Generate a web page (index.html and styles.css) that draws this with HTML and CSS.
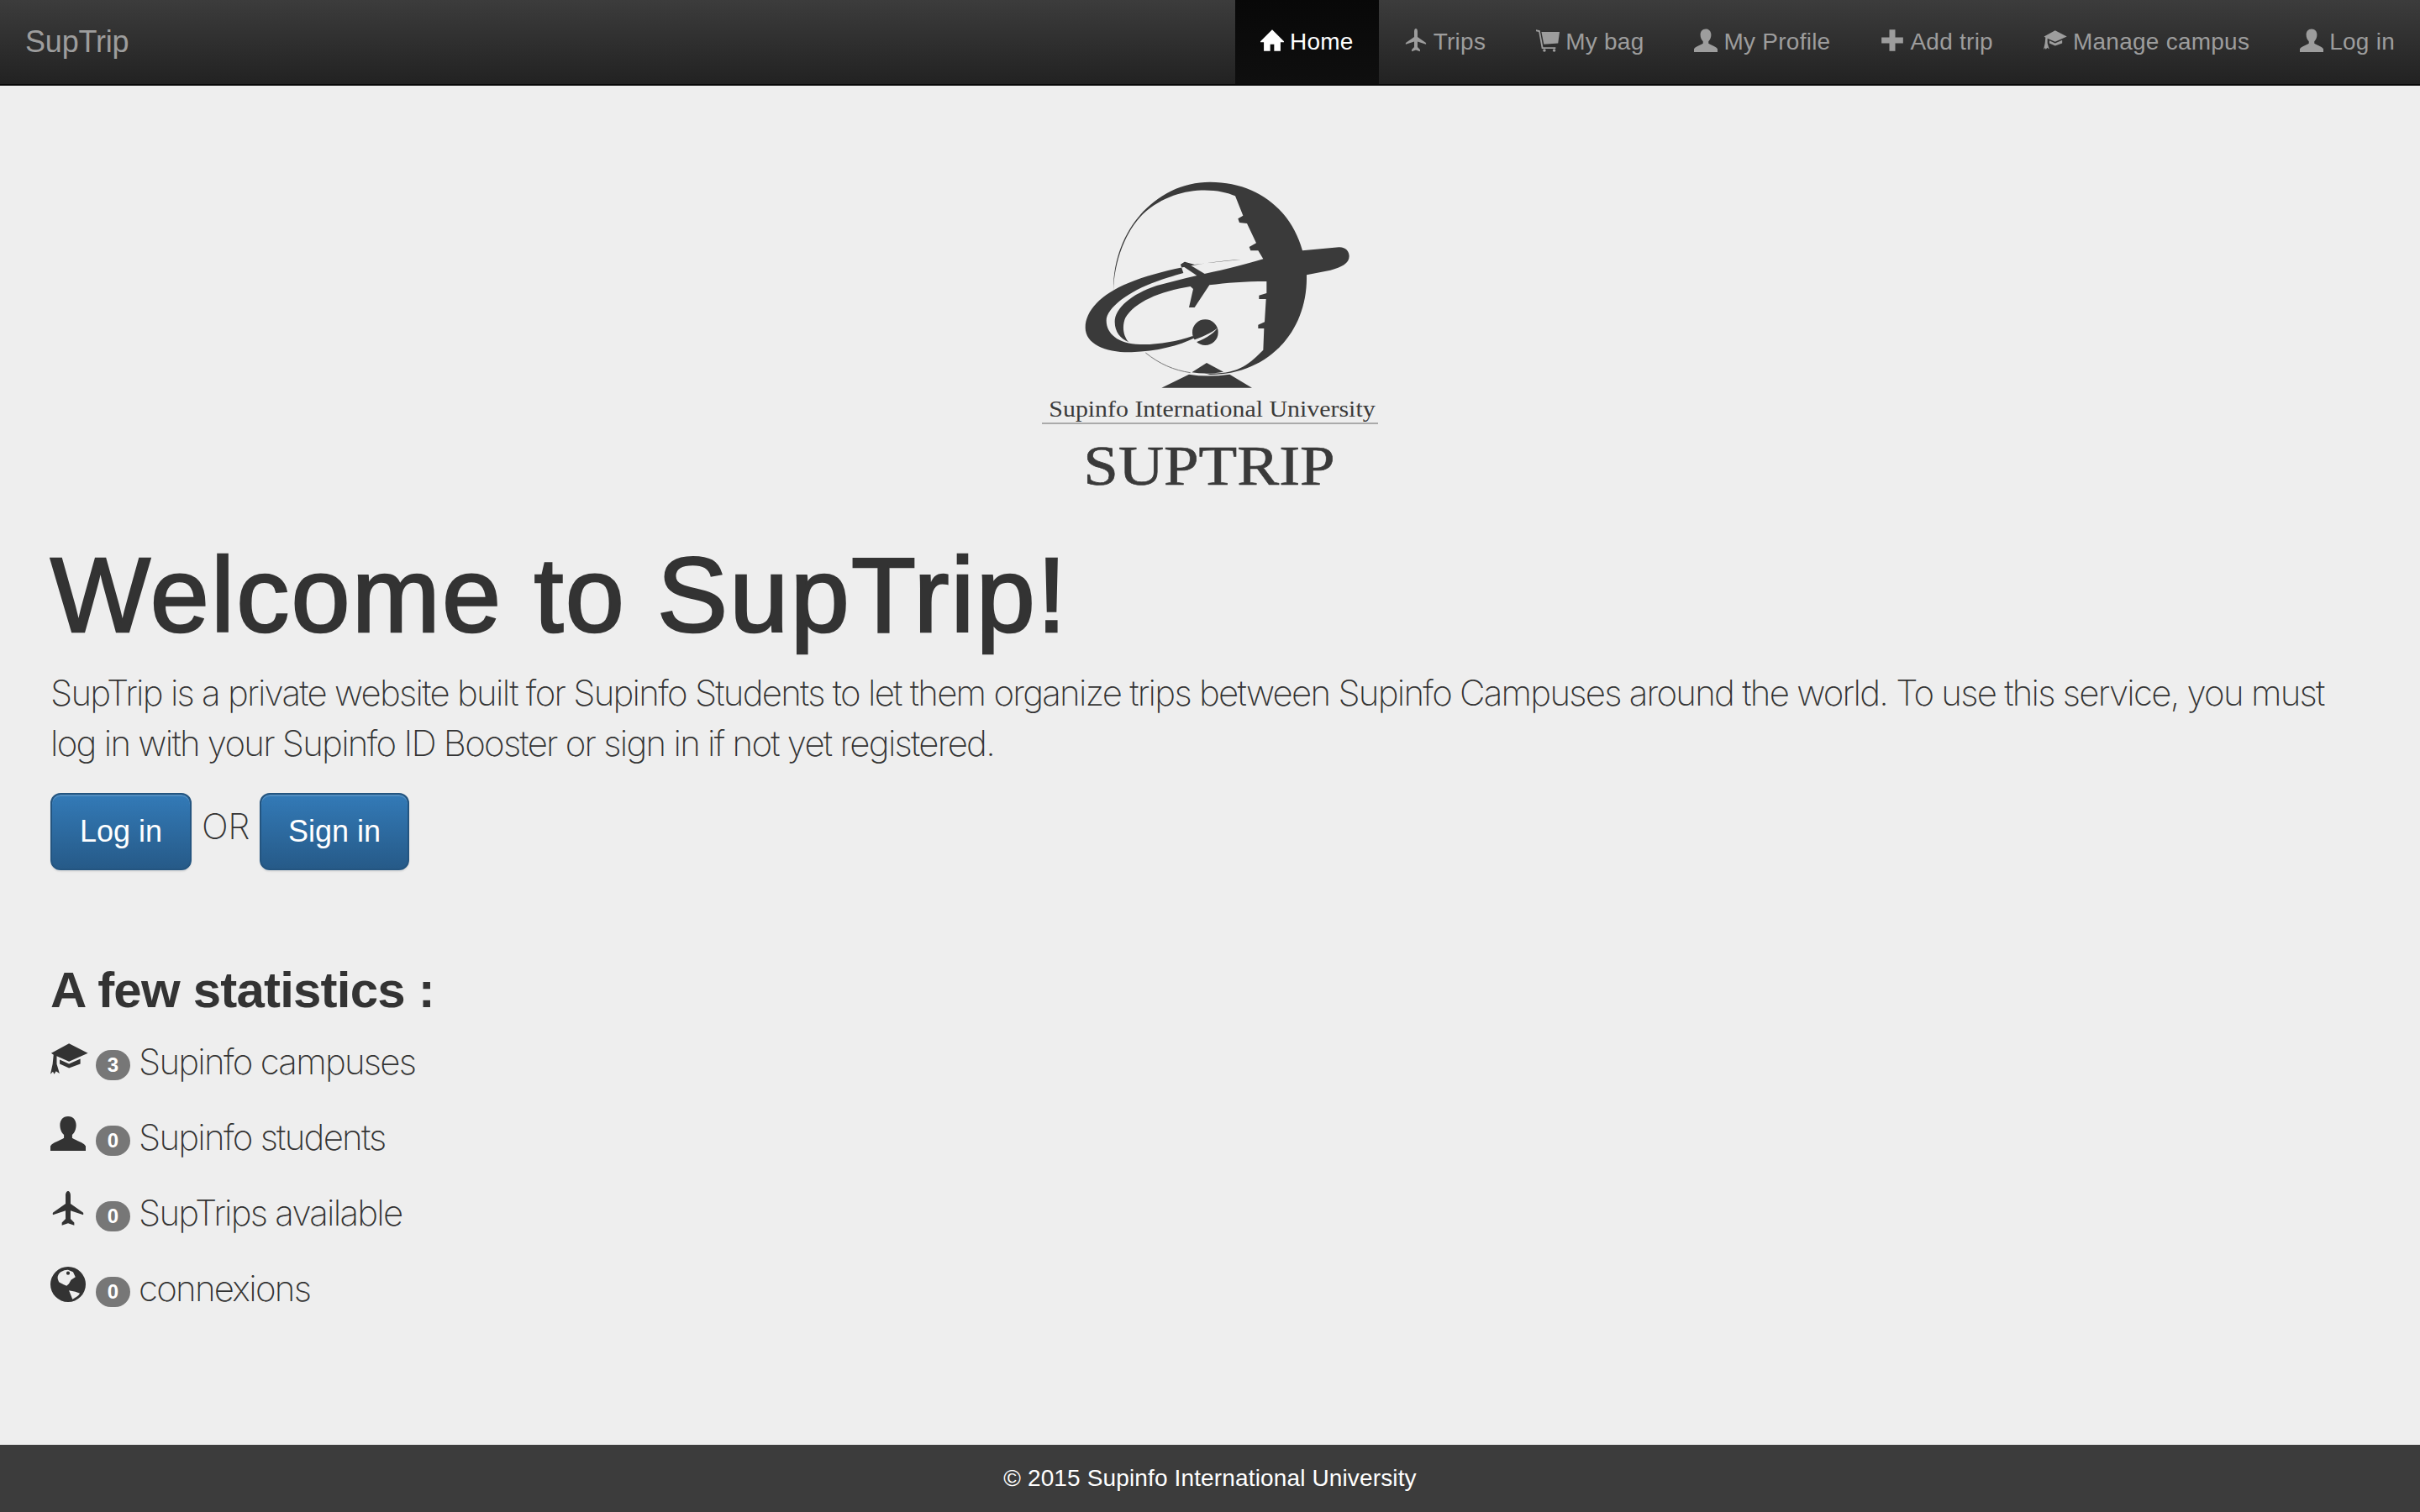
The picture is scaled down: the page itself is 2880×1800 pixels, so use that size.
FILE: index.html
```html
<!DOCTYPE html>
<html lang="en">
<head>
<meta charset="utf-8">
<title>SupTrip</title>
<link rel="stylesheet" href="styles.css">
</head>
<body>
<svg class="sprite" xmlns="http://www.w3.org/2000/svg">
  <symbol id="i-home" viewBox="0 0 24 24"><path d="M12 1 0 13v1h3.500v9H10v-7h4v7h6.500v-9H24v-1z"/></symbol>
  <symbol id="i-plane" viewBox="0 0 24 24"><path d="M12 0c-1.100 0-1.700 1.500-1.700 3v5.600L2 14.400c-.5.400-.5 1-.3 1.700l8.600-2.800v5.600l-2.500 2.500v1.900L12 21.800l4.200 1.500v-1.900l-2.500-2.500v-5.600l8.600 2.800c.2-.7.200-1.300-.3-1.700l-8.300-5.800V3c0-1.500-.6-3-1.700-3z"/></symbol>
  <symbol id="i-cart" viewBox="0 0 24 24"><path d="M5.500 3.500H24l-1.500 11.500L8 16z"/><path d="M0 1l4 1 3.200 17H20v1.600H5.800L2.800 3.500 0 2.800z"/><circle cx="8.500" cy="22.300" r="1.500"/><circle cx="18.500" cy="22.300" r="1.500"/></symbol>
  <symbol id="i-user" viewBox="0 0 24 24"><path d="M12 .5c-3.600 0-5.500 2.700-5.500 6 0 2.800 1.200 5.300 2.700 6.600v2.200c-3 2-7.700 3-9.200 5.500v3.200h24v-3.200c-1.500-2.500-6.200-3.500-9.200-5.500v-2.200c1.500-1.300 2.700-3.800 2.700-6.600 0-3.300-1.900-6-5.500-6z"/></symbol>
  <symbol id="i-plus" viewBox="0 0 24 24"><path d="M9 1h6v8h8v6h-8v8H9v-8H1V9h8z"/></symbol>
  <symbol id="i-edu" viewBox="0 0 24 20"><path d="M.5 6.100 11.800 0l12 6.100-12 5.400L4 8v5l1.800 6-2.200-1.400-1.200 1.800-.8-1.600L0 19.400 1.400 13 2 7.200z"/><path d="M5.900 10.200 11.800 12.900 19 9.700v3.200l-7.200 2.700-5.900-2.700z"/></symbol>
  <symbol id="i-globe" viewBox="0 0 24 24"><path fill-rule="evenodd" d="M12 0a12 12 0 1 0 0 24 12 12 0 0 0 0-24zM5 6.600C5.500 5 6.500 4 7 3.600 9 2.400 11 2 12 2.200l3.400 1.400L17 7l-3 2-1.400 2.600L11 13l-2-.8-3-1.600C5 9 4.800 8 5 6.600zM12 3.200a1.200 1.200 0 1 0 0 2.400 1.200 1.200 0 0 0 0-2.400zM12.600 16.200 17 17l3 1.200c-1 1.600-2 2.400-5 4l-1-2.600z"/></symbol>
</svg>

<header class="navbar">
  <a class="brand">SupTrip</a>
  <nav class="nav">
    <a class="nav-item active"><svg class="icon"><use href="#i-home"/></svg>Home</a>
    <a class="nav-item"><svg class="icon"><use href="#i-plane"/></svg>Trips</a>
    <a class="nav-item"><svg class="icon"><use href="#i-cart"/></svg>My bag</a>
    <a class="nav-item"><svg class="icon"><use href="#i-user"/></svg>My Profile</a>
    <a class="nav-item"><svg class="icon"><use href="#i-plus"/></svg>Add trip</a>
    <a class="nav-item"><svg class="icon"><use href="#i-edu"/></svg>Manage campus</a>
    <a class="nav-item"><svg class="icon"><use href="#i-user"/></svg>Log in</a>
  </nav>
</header>

<main class="content">
  <svg class="logo" viewBox="0 0 1320 1200" xmlns="http://www.w3.org/2000/svg">
    <g class="logo-fill">
      <path d="M315 440C312 220 470 50 660 50C830 50 950 150 990 295L1120 283C1145 282 1157 298 1157 315C1157 340 1130 355 1090 365L1005 382C1010 590 860 740 660 738L640 733C760 740 800 700 850 650L853 573L832 573L832 560L855 550L860 468L835 468L835 455L862 447L862 405C780 405 720 410 658 418L605 498L585 498L600 432L590 423C480 440 390 480 358 535C345 565 350 600 370 622C340 610 320 585 320 550C320 500 380 450 470 420L575 393L640 378C720 362 790 342 850 325L832 295L805 295L800 282L825 268L792 198L765 195L760 181L778 170L750 100C680 68 530 62 420 165C360 225 318 330 315 440Z"/>
      <path d="M770 327C640 335 480 365 370 410C270 450 215 510 215 570C215 630 290 660 380 658C470 655 550 635 605 607L598 600C540 620 470 632 410 630C330 628 290 590 290 545C290 500 370 440 470 405C490 397 530 385 565 375L555 345L570 335L605 345C660 338 720 332 770 327Z"/>
      <path d="M570 335 645 380 625 392 555 345Z"/>
      <circle cx="643" cy="587" r="46"/>
      <path d="M595 730 648 696 708 728Q650 738 595 730Z"/>
      <path d="M487 785 585 737Q650 748 730 737L810 785Z"/>
    </g>
    <path class="logo-cut" d="M592 618C630 605 665 590 688 570C670 595 635 615 600 625Z"/>
    <path class="logo-arc" d="M430 660C480 700 530 722 590 731"/>
    <text class="logo-small" x="85" y="887" textLength="1165" lengthAdjust="spacingAndGlyphs">Supinfo International University</text>
    <rect class="logo-rule" x="60" y="910" width="1200" height="4"/>
    <text class="logo-big" x="208" y="1130" textLength="898" lengthAdjust="spacingAndGlyphs">SUPTRIP</text>
  </svg>

  <h1 class="title">Welcome to SupTrip!</h1>
  <p class="lead">SupTrip is a private website built for Supinfo Students to let them organize trips between Supinfo Campuses around the world. To use this service, you must log in with your Supinfo ID Booster or sign in if not yet registered.</p>

  <div class="actions">
    <a class="btn btn-login">Log in</a>
    <span class="or">OR</span>
    <a class="btn btn-signin">Sign in</a>
  </div>

  <h2 class="subtitle">A few statistics :</h2>
  <ul class="stats">
    <li class="stat"><svg class="stat-icon edu"><use href="#i-edu"/></svg><span class="badge">3</span><span class="stat-label">Supinfo campuses</span></li>
    <li class="stat"><svg class="stat-icon"><use href="#i-user"/></svg><span class="badge">0</span><span class="stat-label">Supinfo students</span></li>
    <li class="stat"><svg class="stat-icon"><use href="#i-plane"/></svg><span class="badge">0</span><span class="stat-label">SupTrips available</span></li>
    <li class="stat"><svg class="stat-icon"><use href="#i-globe"/></svg><span class="badge">0</span><span class="stat-label">connexions</span></li>
  </ul>
</main>

<footer class="footer">© 2015 Supinfo International University</footer>
</body>
</html>
```

FILE: styles.css
```css
* { box-sizing: border-box; }
html, body { margin: 0; height: 100%; }
body {
  display: flex;
  flex-direction: column;
  min-height: 1800px;
  background: #eee;
  color: #333;
  font-family: "Liberation Sans", Arial, sans-serif;
}
.sprite { display: none; }

.navbar {
  flex: none;
  display: flex;
  justify-content: space-between;
  align-items: stretch;
  height: 102px;
  padding-left: 30px;
  background: linear-gradient(#3c3c3c, #222);
  border-bottom: 2px solid #080808;
}
.brand { align-self: center; font-size: 36px; color: #9d9d9d; letter-spacing: -0.2px; }
.nav { display: flex; }
.nav-item {
  display: flex;
  align-items: center;
  gap: 7px;
  padding: 0 30px;
  font-size: 28px;
  color: #9d9d9d;
  letter-spacing: 0.25px;
}
.nav-item.active { color: #fff; background: linear-gradient(#080808, #0f0f0f); }
.icon { width: 28px; height: 28px; margin-bottom: 4px; fill: currentColor; }

.content { flex: 1; padding: 98px 60px 0; }
.logo { display: block; width: 440px; height: 400px; margin: 0 auto; }
.logo-fill { fill: #3a3a3a; }
.logo-cut { fill: #eee; }
.logo-arc { fill: none; stroke: #777; stroke-width: 3; }
.logo-rule { fill: #888; }
.logo-small { font-family: "Liberation Serif", serif; font-size: 83px; fill: #3a3a3a; }
.logo-big { font-family: "Liberation Serif", serif; font-size: 205px; fill: #3a3a3a; stroke: #3a3a3a; stroke-width: 2; }

.title { margin: 40px 0 16px; font-size: 126px; line-height: 1.1; font-weight: 400; letter-spacing: 2.200px; -webkit-text-stroke: 2.500px #333; }
.lead { margin: 0 0 29px; font-family: Inter, sans-serif; font-size: 42px; font-weight: 200; line-height: 60px; letter-spacing: -1.750px; }
.actions { display: flex; gap: 12px; align-items: flex-start; }
.btn { display: block; height: 92px; padding: 20px 33px; font-size: 36px; line-height: 48px; color: #fff; background: linear-gradient(#337ab7, #265a88); border: 2px solid #245580; border-radius: 12px; box-shadow: inset 0 2px 0 rgba(255,255,255,.15), 0 2px 2px rgba(0,0,0,.075); }
.btn-signin { padding-left: 32px; padding-right: 32px; }
.or { margin-top: 10px; font-family: Inter, sans-serif; font-weight: 200; font-size: 42px; line-height: 60px; letter-spacing: -0.5px; }
.subtitle { margin: 110px 0 11px; font-size: 60px; line-height: 66px; font-weight: 700; letter-spacing: -0.8px; }
.stats { list-style: none; margin: 0; padding: 0; }
.stat { display: flex; align-items: center; height: 90px; }
.stat-icon { flex: none; width: 42px; height: 42px; margin: 0 12px 18px 0; fill: #333; }
.stat-icon.edu { width: 45px; height: 38px; margin-right: 9px; margin-bottom: 14px; }
.badge { width: 41px; height: 36px; border-radius: 18px; background: #777; color: #fff; font-size: 24px; font-weight: 700; line-height: 36px; text-align: center; }
.stat-label { margin: -8px 0 0 10px; font-family: Inter, sans-serif; font-weight: 200; font-size: 42px; letter-spacing: -1.750px; }
.footer { flex: none; height: 80px; background: #3c3c3c; color: #fff; font-size: 28px; line-height: 80px; text-align: center; letter-spacing: 0.14px; }
```
